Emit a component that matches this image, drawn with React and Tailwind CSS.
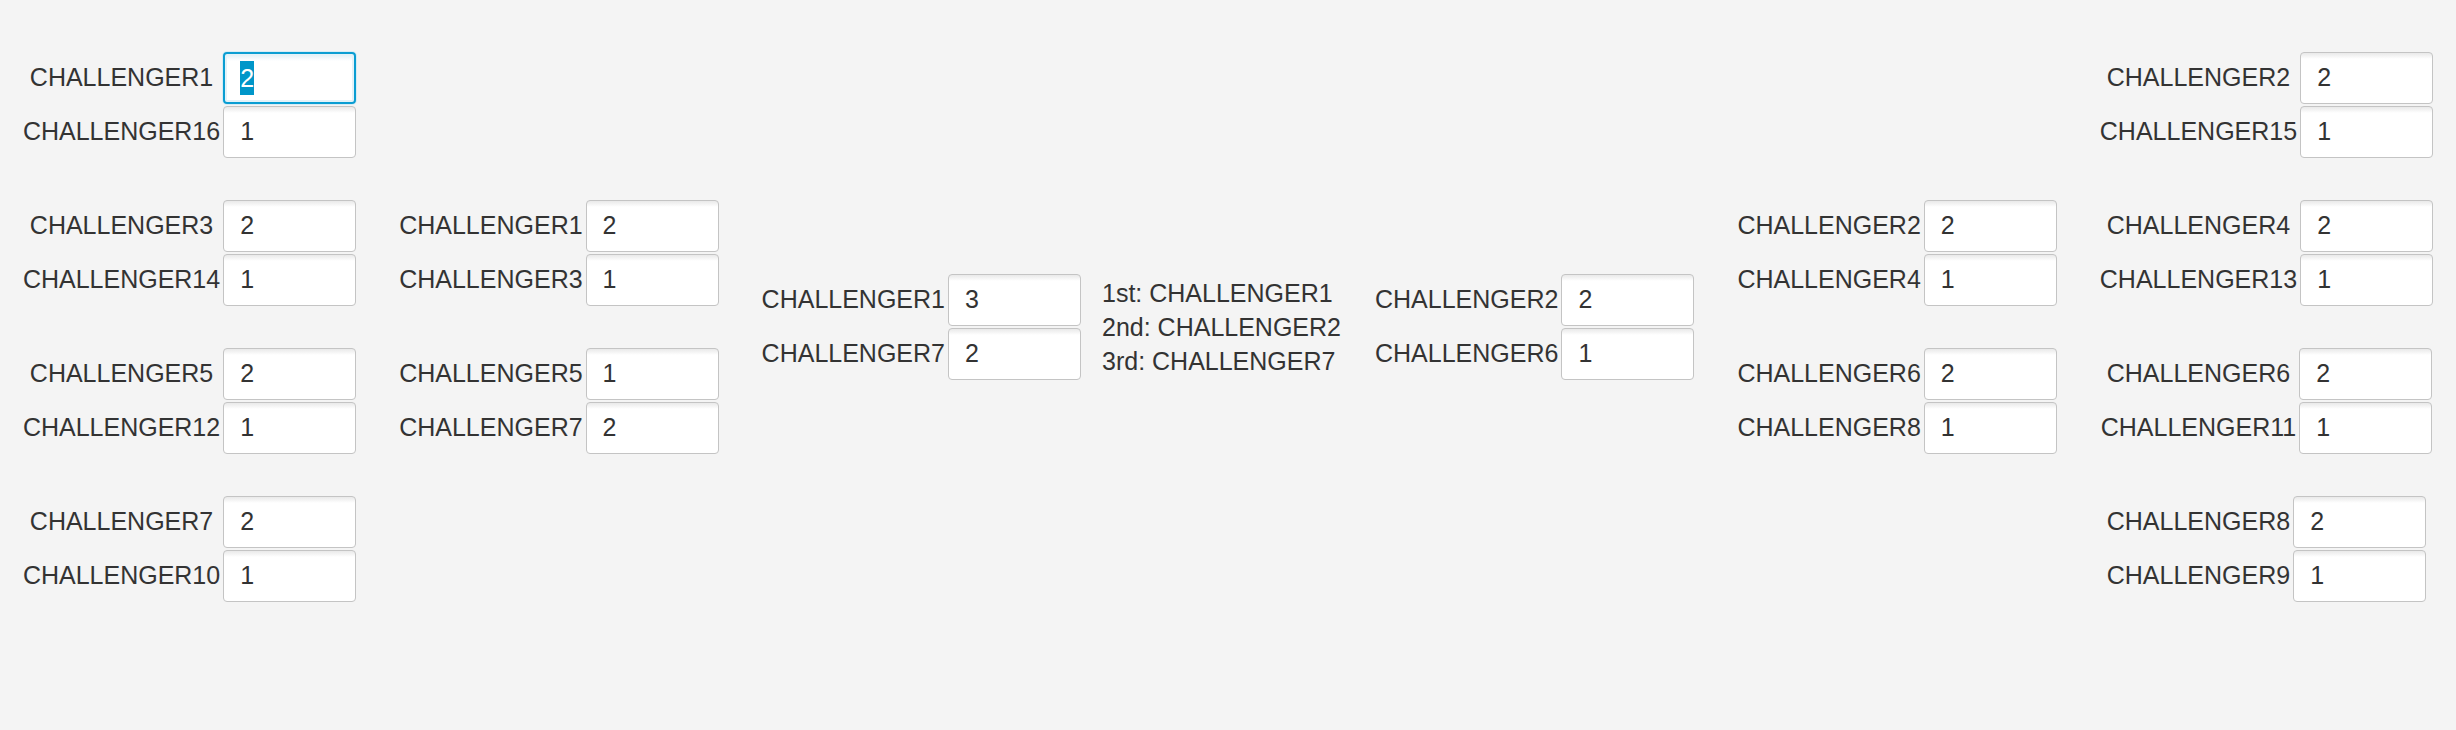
import React from "react";

const FONT = { fontFamily: '"Liberation Sans", Arial, sans-serif' };

function Box({ value, focused }) {
  if (focused) {
    return (
      <div className="w-[133px] h-[52px] rounded-[4px] border-2 border-[#0a9dd2] shadow-[0_0_0_1px_#d6ecf5,inset_0_0_0_2px_#e3f2f8] bg-[linear-gradient(to_bottom,#dcedf5,#ffffff_7px)] flex items-center pl-[15px]">
        <span className="bg-[#0096c9] text-white leading-[34px] text-[25px]">{value}</span>
      </div>
    );
  }
  return (
    <div className="w-[133px] h-[52px] rounded-[4px] border border-[#c4c4c4] bg-[linear-gradient(to_bottom,#e9e9e9,#ffffff_6px)] flex items-center pl-[16px] text-[25px] text-[#333333]">
      {value}
    </div>
  );
}

function Match({ rows }) {
  return (
    <div className="grid grid-cols-[auto_auto] gap-x-[3px] gap-y-[2px] items-center">
      {rows.map(([name, val, focused], i) => (
        <React.Fragment key={i}>
          <div className="text-center whitespace-nowrap text-[25px] text-[#333333]">{name}</div>
          <Box value={val} focused={focused} />
        </React.Fragment>
      ))}
    </div>
  );
}

function Column({ matches, className = "" }) {
  return (
    <div className={"flex flex-col items-center gap-[42px] " + className}>
      {matches.map((m, i) => (
        <Match key={i} rows={m} />
      ))}
    </div>
  );
}

const col1 = [
  [["CHALLENGER1", "2", true], ["CHALLENGER16", "1"]],
  [["CHALLENGER3", "2"], ["CHALLENGER14", "1"]],
  [["CHALLENGER5", "2"], ["CHALLENGER12", "1"]],
  [["CHALLENGER7", "2"], ["CHALLENGER10", "1"]],
];
const col2 = [
  [["CHALLENGER1", "2"], ["CHALLENGER3", "1"]],
  [["CHALLENGER5", "1"], ["CHALLENGER7", "2"]],
];
const col3 = [[["CHALLENGER1", "3"], ["CHALLENGER7", "2"]]];
const col4 = [[["CHALLENGER2", "2"], ["CHALLENGER6", "1"]]];
const col5 = [
  [["CHALLENGER2", "2"], ["CHALLENGER4", "1"]],
  [["CHALLENGER6", "2"], ["CHALLENGER8", "1"]],
];
const col6 = [
  [["CHALLENGER2", "2"], ["CHALLENGER15", "1"]],
  [["CHALLENGER4", "2"], ["CHALLENGER13", "1"]],
  [["CHALLENGER6", "2"], ["CHALLENGER11", "1"]],
  [["CHALLENGER8", "2"], ["CHALLENGER9", "1"]],
];

export default function App() {
  return (
    <div className="w-full h-[730px] bg-[#f4f4f4] pt-[52px]" style={FONT}>
      <div className="flex items-center justify-center">
        <Column matches={col1} />
        <Column matches={col2} className="ml-[43px]" />
        <Column matches={col3} className="ml-[43px]" />
        <div className="w-[252px] mx-[21px] text-[25px] leading-[34px] text-[#333333] whitespace-nowrap">
          <div>1st: CHALLENGER1</div>
          <div>2nd: CHALLENGER2</div>
          <div>3rd: CHALLENGER7</div>
        </div>
        <Column matches={col4} />
        <Column matches={col5} className="ml-[43px]" />
        <Column matches={col6} className="ml-[43px]" />
      </div>
    </div>
  );
}
